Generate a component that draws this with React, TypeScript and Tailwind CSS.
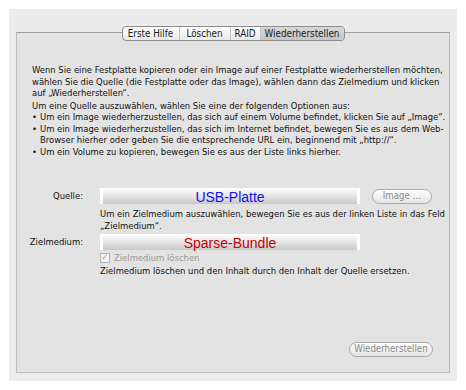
import React from "react";

const tabs = [
  { t: "Erste Hilfe", w: "w-[56px]" },
  { t: "Löschen", w: "w-[51px]" },
  { t: "RAID", w: "w-[30px]" },
  { t: "Wiederherstellen", w: "w-[84px]" },
];

const Well = ({ text, color }: { text: string; color: string }) => (
  <div className="w-[260px] h-[16px] bg-white px-[3px] pt-[1px]">
    <div
      className={`h-[15px] flex items-center justify-center bg-gradient-to-b from-[#fbfbfb] via-[#e4e4e4] to-[#c9c9c9] text-[14px] leading-none ${color}`}
      style={{ fontFamily: '"Liberation Sans", Arial, sans-serif' }}
    >
      {text}
    </div>
  </div>
);

const Pill = ({ label, w }: { label: string; w: string }) => (
  <div
    className={`${w} h-[15px] rounded-full border border-[#a9a9a9] bg-gradient-to-b from-[#fdfdfd] to-[#e6e6e6] flex items-center justify-center text-[9.6px] whitespace-nowrap text-[#8a8a8a]`}
  >
    {label}
  </div>
);

export default function App() {
  return (
    <div
      className="w-[466px] h-[390px] bg-white p-[9px] text-[#111] antialiased"
      style={{ fontFamily: '"DejaVu Sans Condensed", "DejaVu Sans", sans-serif' }}
    >
      <div className="w-[448px] h-[372px] bg-[#ececec] px-[7px] pt-[23px]">
        <div className="h-[341px] border border-[#bdbdbd] border-t-[#9f9f9f] bg-[#e3e3e3] flex flex-col">
          <div className="-mt-[7px] flex justify-center">
            <div className="flex h-[15px] rounded-[4px] border border-[#8c8c8c] overflow-hidden bg-gradient-to-b from-[#fefefe] to-[#e9e9e9] text-[9.8px] leading-[13px] text-[#1a1a1a] whitespace-nowrap">
              {tabs.map((x, i) => (
                <div
                  key={x.t}
                  className={`flex items-center justify-center ${x.w} ${i > 0 ? "border-l border-[#c4c4c4]" : ""} ${
                    i === 3 ? "bg-gradient-to-b from-[#d8d8d8] to-[#c6c6c6]" : ""
                  }`}
                >
                  {x.t}
                </div>
              ))}
            </div>
          </div>

          <div className="pl-[15px] pt-[23px] text-[9.4px] leading-[11.5px] whitespace-nowrap">
            <p>
              Wenn Sie eine Festplatte kopieren oder ein Image auf einer Festplatte wiederherstellen möchten,
              <br />
              wählen Sie die Quelle (die Festplatte oder das Image), wählen dann das Zielmedium und klicken
              <br />
              auf „Wiederherstellen“.
            </p>
            <p className="mt-[1px]">Um eine Quelle auszuwählen, wählen Sie eine der folgenden Optionen aus:</p>
            <ul>
              <li className="flex">
                <span className="w-[8px] shrink-0">•</span>
                <span>Um ein Image wiederherzustellen, das sich auf einem Volume befindet, klicken Sie auf „Image“.</span>
              </li>
              <li className="flex">
                <span className="w-[8px] shrink-0">•</span>
                <span>
                  Um ein Image wiederherzustellen, das sich im Internet befindet, bewegen Sie es aus dem Web-
                  <br />
                  Browser hierher oder geben Sie die entsprechende URL ein, beginnend mit „http://“.
                </span>
              </li>
              <li className="flex">
                <span className="w-[8px] shrink-0">•</span>
                <span>Um ein Volume zu kopieren, bewegen Sie es aus der Liste links hierher.</span>
              </li>
            </ul>
          </div>

          <div className="mt-[31px] text-[9.4px] leading-[11.5px] whitespace-nowrap">
            <div className="flex items-center">
              <div className="w-[66px] text-right">Quelle:</div>
              <div className="ml-[17px]">
                <Well text="USB-Platte" color="text-[#1010ee]" />
              </div>
              <div className="ml-[12px]">
                <Pill label="Image …" w="w-[60px]" />
              </div>
            </div>
            <div className="ml-[83px] mt-[4px]">
              Um ein Zielmedium auszuwählen, bewegen Sie es aus der linken Liste in das Feld
              <br />„Zielmedium“.
            </div>
            <div className="flex items-center mt-[3px]">
              <div className="w-[66px] text-right">Zielmedium:</div>
              <div className="ml-[17px]">
                <Well text="Sparse-Bundle" color="text-[#c40000]" />
              </div>
            </div>
            <div className="ml-[83px] mt-[2px] flex items-center text-[#9a9a9a]">
              <span className="w-[10px] h-[10px] border border-[#b5b5b5] bg-[#f4f4f4] flex items-center justify-center text-[9px] leading-none text-[#9a9a9a] mr-[4px]">
                ✓
              </span>
              Zielmedium löschen
            </div>
            <div className="ml-[83px] mt-[1px]">
              Zielmedium löschen und den Inhalt durch den Inhalt der Quelle ersetzen.
            </div>
          </div>

          <div className="mt-auto mb-[15px] flex justify-end pr-[16px]">
            <Pill label="Wiederherstellen" w="w-[84px]" />
          </div>
        </div>
      </div>
    </div>
  );
}
